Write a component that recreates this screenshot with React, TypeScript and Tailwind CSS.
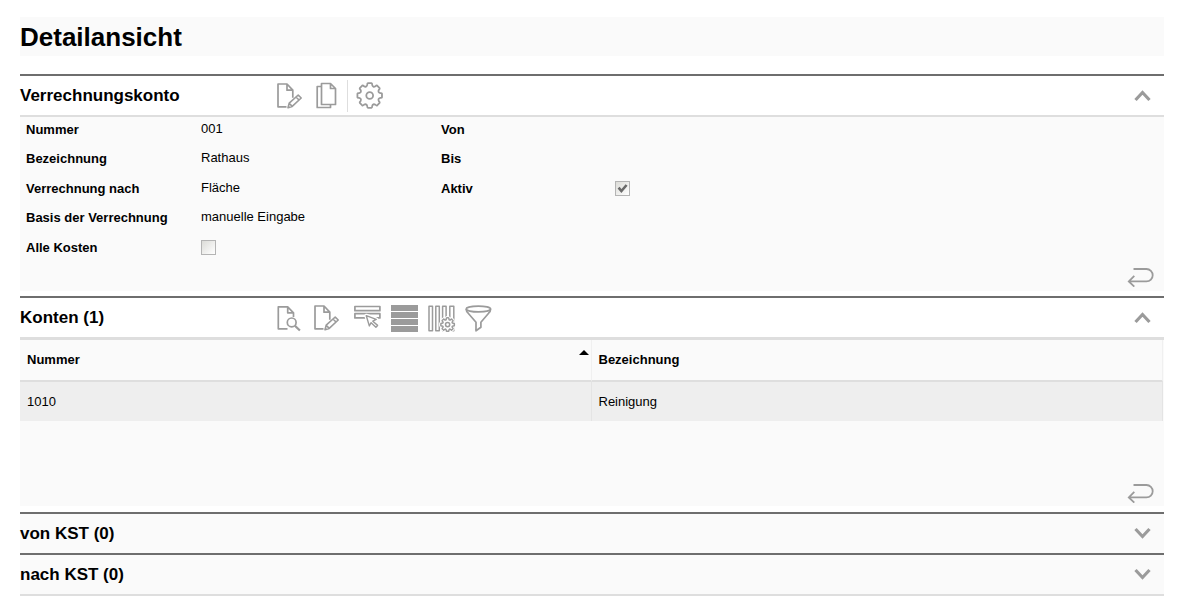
import { useState } from 'react'

interface SectionProps {
  title: string
  toolbar?: React.ReactNode
  tinted?: boolean
  defaultOpen?: boolean
  children?: React.ReactNode
}

// Closed outline of a cog wheel with eight rounded teeth
function gearPath(cx: number, cy: number, outer: number, inner: number) {
  const at = (r: number, deg: number) => {
    const a = (deg * Math.PI) / 180
    return `${(cx + r * Math.cos(a)).toFixed(2)} ${(cy + r * Math.sin(a)).toFixed(2)}`
  }
  const mid = (outer + inner) / 2
  let d = ''
  for (let i = 0; i < 8; i++) {
    const c = i * 45
    d += `${i === 0 ? 'M' : 'L'}${at(outer, c - 8)}L${at(outer, c + 8)}`
    d += `Q${at(outer, c + 12)} ${at(mid, c + 13)}`
    d += `Q${at(inner - 1, c + 22.5)} ${at(mid, c + 32)}`
    d += `Q${at(outer, c + 33)} ${at(outer, c + 37)}`
  }
  return d + 'Z'
}

function Icon({ children }: { children: React.ReactNode }) {
  return (
    <svg
      viewBox="0 0 28 27"
      className="w-7 h-[27px] overflow-visible"
      fill="none"
      stroke="#9b9b9b"
      strokeWidth="1.7"
      strokeLinejoin="round"
      aria-hidden="true"
    >
      {children}
    </svg>
  )
}

const EditIcon = () => (
  <Icon>
    <path d="M10.5 24.8H2V2h9l5.8 6.2v7.6M11 2v6.2h5.8" />
    <path d="M12 25.8l1.2-4.6 9-8.2 3 3-9 8.4zM20 15l3 3M13.2 21.2l3 3.2" strokeWidth="1.6" />
  </Icon>
)

const CopyIcon = () => (
  <Icon>
    <path d="M8 4.5H4.2v21h13.3v-3M8.5 1.5h9l5 5v16h-14zM17.5 1.5v5h5" />
  </Icon>
)

const SettingsIcon = () => (
  <Icon>
    <path d={gearPath(13.7, 13.5, 12.4, 9.4)} strokeWidth="1.8" />
    <circle cx="13.7" cy="13.5" r="3.4" strokeWidth="1.8" />
  </Icon>
)

const ViewIcon = () => (
  <Icon>
    <path d="M11.5 24.8H2.3V2.8h9.4l5.8 6v4.2M11.7 2.8v6h5.8" />
    <circle cx="15.7" cy="18.4" r="4.4" />
    <path d="M18.9 21.7l5 4.8" strokeWidth="2.2" />
  </Icon>
)

const SelectRowIcon = () => (
  <Icon>
    <path d="M1.9 2.5h25v4.2h-25zM1.9 9.7h25v4.2h-25z" />
    <path d="M13.3 11.7l9.9 3.7-3.4 1.8 4.8 4.2-1.7 1.8-4.8-4.5-1.8 3.2z" fill="#fff" stroke="#fff" strokeWidth="4" />
    <path d="M13.3 11.7l9.9 3.7-3.4 1.8 4.8 4.2-1.7 1.8-4.8-4.5-1.8 3.2z" strokeWidth="1.4" />
  </Icon>
)

const RowsIcon = () => (
  <Icon>
    <path d="M1 1h27v6H1zM1 8h27v6H1zM1 15h27v6H1zM1 22h27v6H1z" fill="#9b9b9b" stroke="none" />
  </Icon>
)

const ColumnsIcon = () => (
  <Icon>
    <path d="M2 2.2h3.5v24.6H2zM8.8 2.2h3.5v24.6H8.8zM15.6 2.2h3.5v24.6h-3.5zM22.8 2.2h4v24.6h-4z" strokeWidth="1.5" />
    <path d={gearPath(20.6, 20.6, 6.8, 5)} fill="#fff" stroke="#fff" strokeWidth="3.5" />
    <path d={gearPath(20.6, 20.6, 6.8, 5)} strokeWidth="1.5" />
    <circle cx="20.6" cy="20.6" r="2.1" strokeWidth="1.5" />
  </Icon>
)

const FilterIcon = () => (
  <Icon>
    <ellipse cx="14.4" cy="5" rx="12.2" ry="2.9" />
    <path d="M2.2 5.2c0 2 1 3 2 4l7.8 9v8.6l4.9-3.5v-5.1l7.7-9c1-1 2-2 2-4" />
  </Icon>
)

function ToolButton({ label, children }: { label: string; children: React.ReactNode }) {
  return (
    <button type="button" aria-label={label} className="shrink-0 hover:opacity-70">
      {children}
    </button>
  )
}

function BackButton() {
  return (
    <button type="button" aria-label="Zurück" className="hover:opacity-70">
      <svg viewBox="0 0 28 20" className="w-7 h-5" fill="none" stroke="#9b9b9b" strokeWidth="1.8" aria-hidden="true">
        <path d="M6.5 2H19.5a6.2 6.2 0 0 1 0 12.4H2M7.3 8.8L1.8 14.4l5.5 5.2" />
      </svg>
    </button>
  )
}

function Section({ title, toolbar, tinted, defaultOpen = false, children }: SectionProps) {
  const [open, setOpen] = useState(defaultOpen)
  return (
    <section className="border-t-2 border-[#6e6e6e]">
      <div className={`flex items-center h-[39px] ${tinted ? 'bg-[#fafafa]' : 'bg-white'}`}>
        <h2 className="w-64 shrink-0 text-[17px] leading-[25px] font-bold">{title}</h2>
        {toolbar}
        <button
          type="button"
          aria-expanded={open}
          aria-label={title}
          onClick={() => setOpen(!open)}
          className="ml-auto mr-3"
        >
          <svg viewBox="0 0 19 13" className="w-[19px] h-[13px]" fill="none" stroke="#9b9b9b" strokeWidth="3.2" aria-hidden="true">
            <path d={open ? 'M2.5 11L9.5 3.5L16.5 11' : 'M2.5 2L9.5 9.5L16.5 2'} />
          </svg>
        </button>
      </div>
      {open && children}
    </section>
  )
}

function Check({ id, defaultChecked = false }: { id: string; defaultChecked?: boolean }) {
  return (
    <span className="grid w-[15px] h-[15px] mt-1">
      <input
        id={id}
        type="checkbox"
        defaultChecked={defaultChecked}
        className="peer appearance-none w-[15px] h-[15px] [grid-area:1/1] border border-[#b4b4b4] bg-linear-to-br from-[#dcdcd8] to-white"
      />
      <svg
        viewBox="0 0 15 15"
        className="hidden peer-checked:block w-[15px] h-[15px] [grid-area:1/1] pointer-events-none"
        fill="none"
        stroke="#6a6a6a"
        strokeWidth="2.6"
        aria-hidden="true"
      >
        <path d="M3.6 6.6l2.8 3.4L11.6 4" />
      </svg>
    </span>
  )
}

const fields = [
  ['Nummer', '001'],
  ['Bezeichnung', 'Rathaus'],
  ['Verrechnung nach', 'Fläche'],
  ['Basis der Verrechnung', 'manuelle Eingabe'],
]

const konten = [{ nummer: '1010', bezeichnung: 'Reinigung' }]

export default function App() {
  return (
    <main className="min-h-screen bg-white pl-5 pr-[18px] pt-[17px] pb-2 text-black text-[13px] font-['Liberation_Sans',Arial,sans-serif]">
      <h1 className="bg-[#fafafa] mb-[18px] pt-px text-[26px] leading-[38px] font-bold">Detailansicht</h1>

      <Section
        title="Verrechnungskonto"
        defaultOpen
        toolbar={
          <div className="flex items-center gap-[9px]">
            <ToolButton label="Bearbeiten"><EditIcon /></ToolButton>
            <ToolButton label="Kopieren"><CopyIcon /></ToolButton>
            <div className="flex items-center gap-2 h-8 -ml-[3px]">
              <span className="w-px h-8 bg-[#dedede]" />
              <ToolButton label="Einstellungen"><SettingsIcon /></ToolButton>
            </div>
          </div>
        }
      >
        <div className="border-t-2 border-[#dedede] bg-[#fafafa] mb-[5px] pb-1">
          <div className="flex pl-1.5 pt-px">
            <div className="grid grid-cols-[175px_240px] grid-rows-5 h-[147px] items-start">
              {fields.map(([label, value]) => (
                <div key={label} className="contents">
                  <span className="font-bold leading-6">{label}</span>
                  <span className="leading-[22px]">{value}</span>
                </div>
              ))}
              <label htmlFor="alle-kosten" className="font-bold leading-6">Alle Kosten</label>
              <Check id="alle-kosten" />
            </div>
            <div className="grid grid-cols-[174px_1fr] grid-rows-5 h-[147px] items-start">
              <span className="font-bold leading-6 col-span-2">Von</span>
              <span className="font-bold leading-6 col-span-2">Bis</span>
              <label htmlFor="aktiv" className="font-bold leading-6">Aktiv</label>
              <Check id="aktiv" defaultChecked />
            </div>
          </div>
          <div className="flex justify-end h-[22px] items-end pr-[9px]">
            <BackButton />
          </div>
        </div>
      </Section>

      <Section
        title="Konten (1)"
        defaultOpen
        toolbar={
          <div className="flex items-center gap-3">
            <div className="flex items-center gap-[9px]">
              <ToolButton label="Anzeigen"><ViewIcon /></ToolButton>
              <ToolButton label="Bearbeiten"><EditIcon /></ToolButton>
            </div>
            <div className="flex items-center gap-[9px]">
              <ToolButton label="Zeile auswählen"><SelectRowIcon /></ToolButton>
              <ToolButton label="Alle Zeilen"><RowsIcon /></ToolButton>
              <ToolButton label="Spalten einstellen"><ColumnsIcon /></ToolButton>
              <ToolButton label="Filter"><FilterIcon /></ToolButton>
            </div>
          </div>
        }
      >
        <div className="border-t-3 border-[#dedede] bg-[#fafafa] mb-1.5 pb-[3px]">
          <div className="pr-px">
            <table className="w-full table-fixed border-separate border-spacing-0 text-left">
              <thead>
                <tr className="h-[42px]">
                  <th className="w-1/2 p-0 pl-[7px] border-r border-b-2 border-r-[#f0f0f0] border-b-[#dedede]">
                    <div className="flex items-start justify-between">
                      Nummer
                      <svg viewBox="0 0 10 5" className="w-2.5 h-[5px] mr-0.5" aria-hidden="true">
                        <path d="M0 5L5 0l5 5z" fill="#000" />
                      </svg>
                    </div>
                  </th>
                  <th className="p-0 pl-[7px] border-r border-b-2 border-r-[#f0f0f0] border-b-[#dedede]">Bezeichnung</th>
                </tr>
              </thead>
              <tbody>
                {konten.map((k) => (
                  <tr key={k.nummer} className="h-[39px] bg-[#eeeeee]">
                    <td className="p-0 pl-[7px] border-r border-[#e4e4e4]">{k.nummer}</td>
                    <td className="p-0 pl-[7px] border-r border-[#e4e4e4]">{k.bezeichnung}</td>
                  </tr>
                ))}
              </tbody>
            </table>
          </div>
          <div className="flex justify-end h-[82px] items-end pr-[9px]">
            <BackButton />
          </div>
        </div>
      </Section>

      <Section title="von KST (0)" tinted />
      <div className="border-b-2 border-[#dedede]">
        <Section title="nach KST (0)" tinted />
      </div>
    </main>
  )
}
